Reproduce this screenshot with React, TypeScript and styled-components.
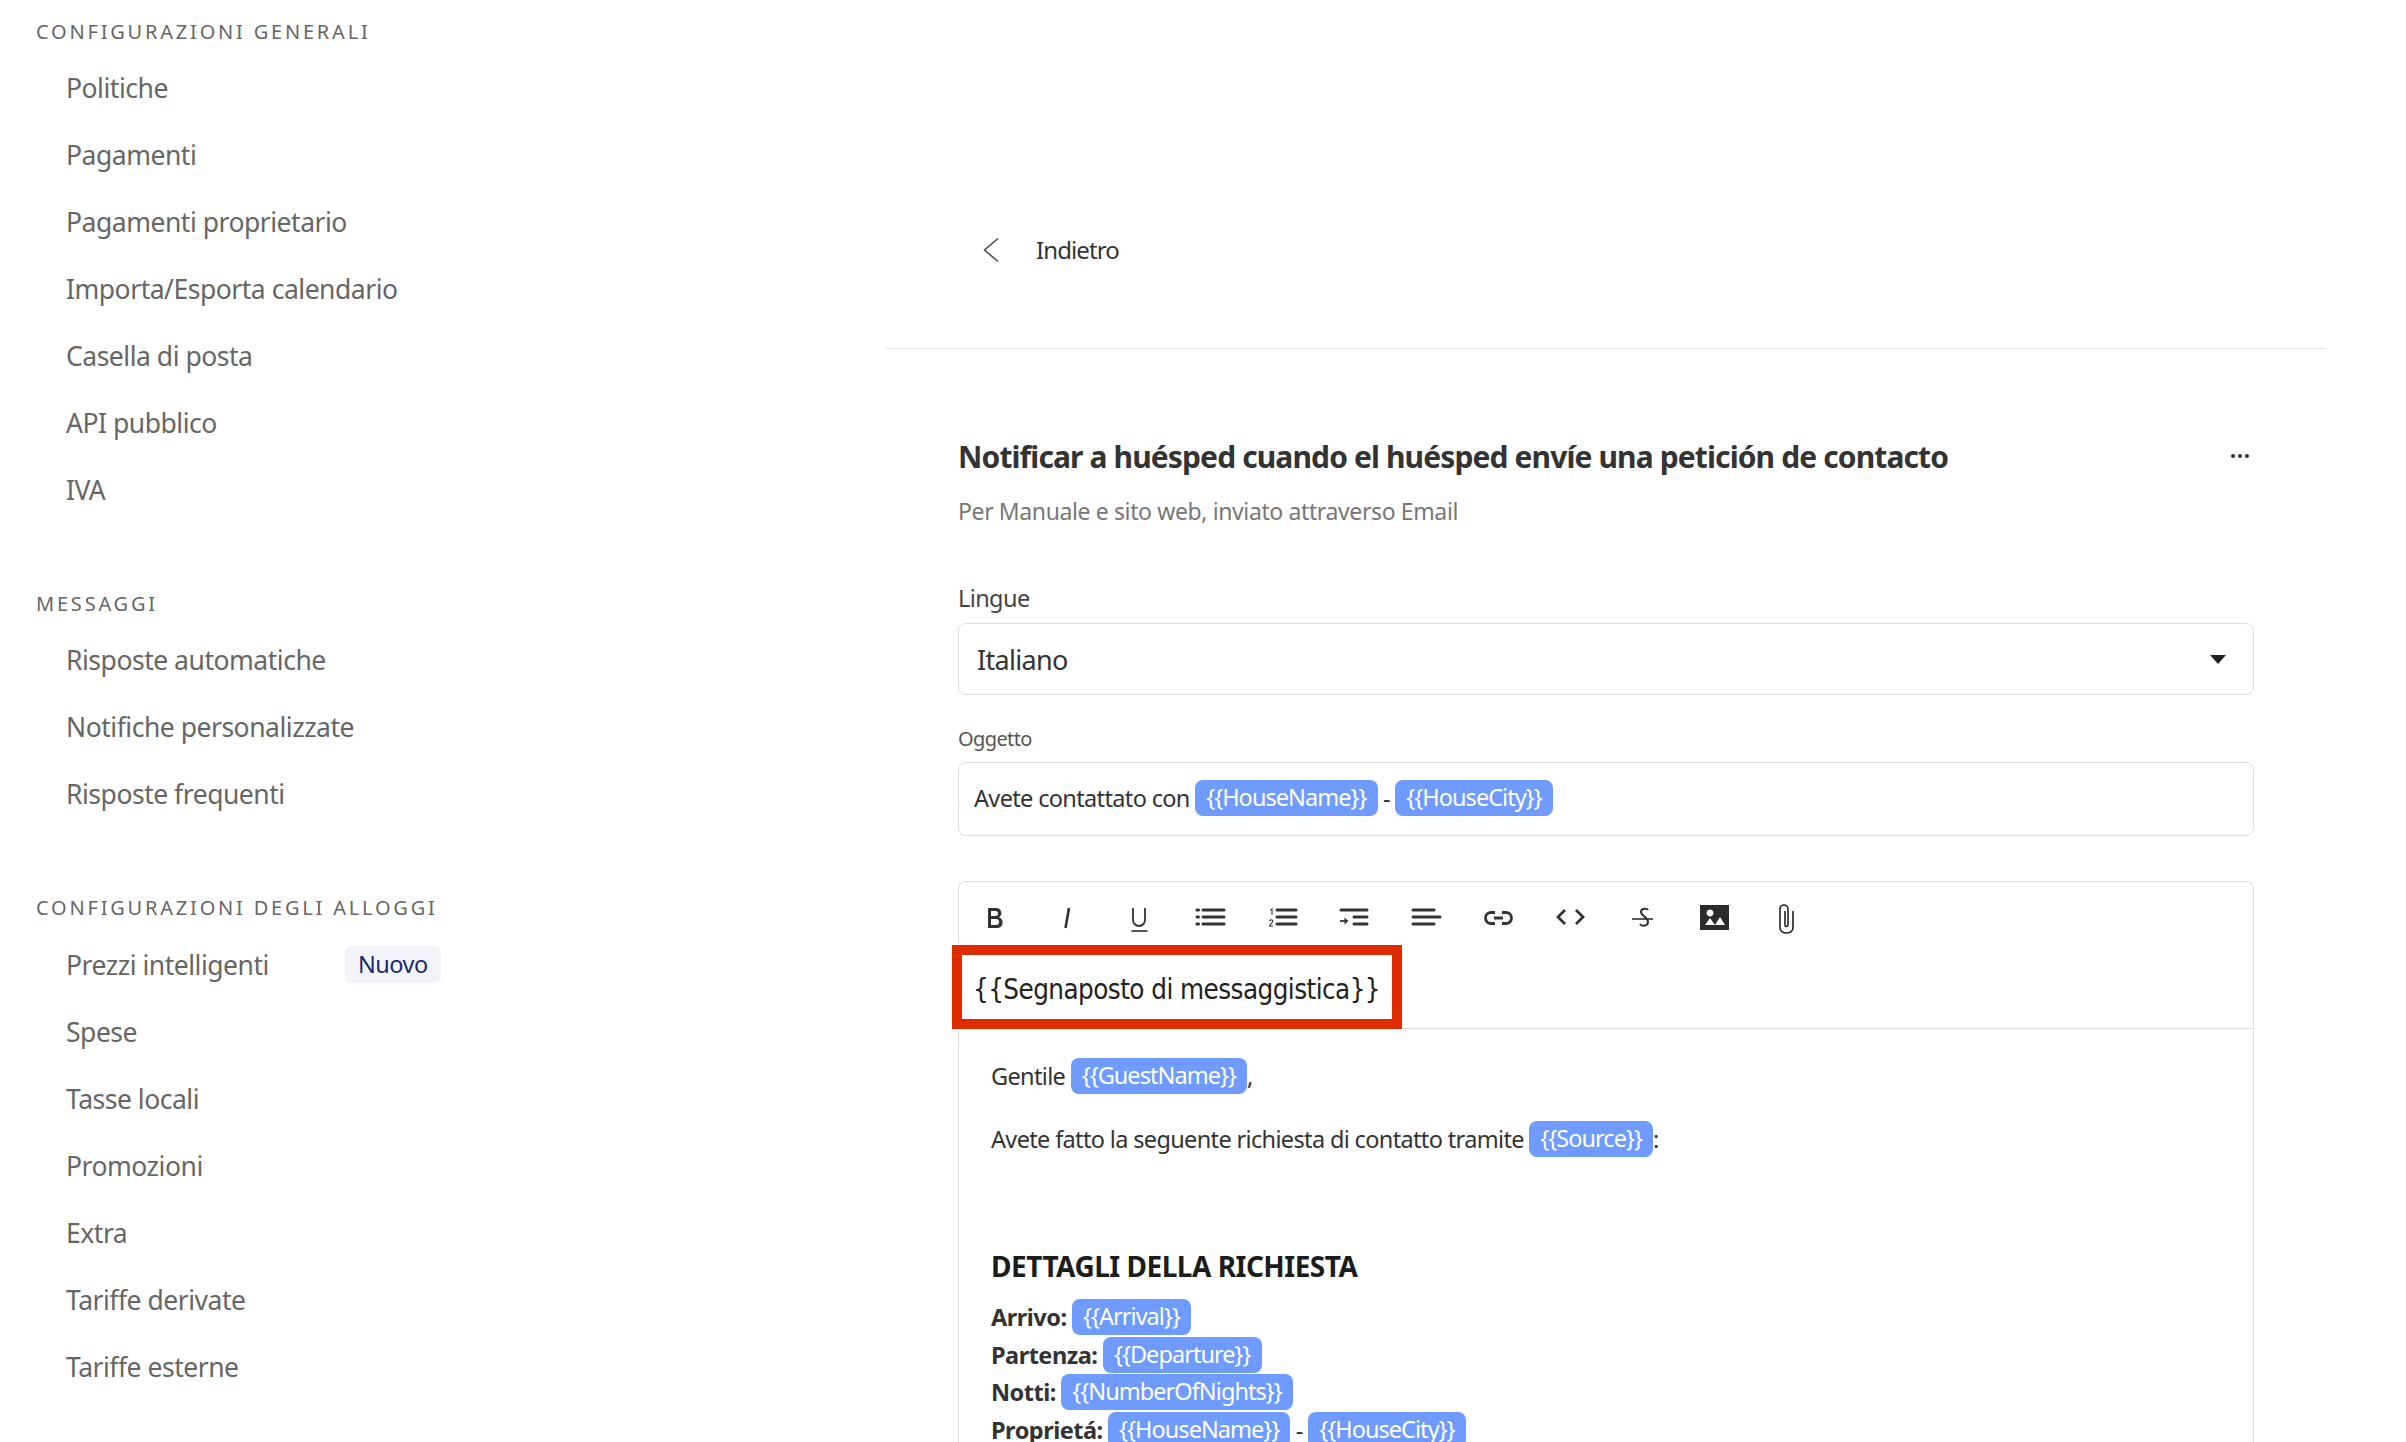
import React from 'react'
import styled, { createGlobalStyle } from 'styled-components'

const GlobalStyle = createGlobalStyle`
  html, body {
    margin: 0;
    padding: 0;
    height: 100%;
    overflow: hidden;
    background: #fff;
  }
  body {
    font-family: 'Noto Sans', 'Open Sans', sans-serif;
  }
`

const settings = ['Politiche', 'Pagamenti', 'Pagamenti proprietario', 'Importa/Esporta calendario', 'Casella di posta', 'API pubblico', 'IVA']
const messages = ['Risposte automatiche', 'Notifiche personalizzate', 'Risposte frequenti']
const rentals = ['Spese', 'Tasse locali', 'Promozioni', 'Extra', 'Tariffe derivate', 'Tariffe esterne']

const Icon = ({ children }: { children: React.ReactNode }) => (
  <svg width="36" height="36" viewBox="0 0 36 36" fill="none" stroke="#333">
    {children}
  </svg>
)

const bars = (x1: number, x2: number) => (
  <path d={`M${x1} 10H${x2}M${x1} 17H${x2}M${x1} 24H${x2}`} strokeWidth="3" strokeLinecap="round" />
)

const toolbar = [
  <Icon key="bold"><path d="M11 8h8a5 5 0 0 1 3 9.200A5.600 5.600 0 0 1 19.500 28H11zM14 11v5h4.500a2.500 2.500 0 0 0 0-5zM14 19v6h5a3 3 0 0 0 0-6z" fill="#333" fillRule="evenodd" stroke="none" /></Icon>,
  <Icon key="italic"><path d="M20 8l-3.500 20" strokeWidth="2.600" /></Icon>,
  <Icon key="underline"><path d="M12 8v12a6 6 0 0 0 12 0V8" strokeWidth="1.800" /><path d="M10.500 31h16" stroke="#555" strokeWidth="2" /></Icon>,
  <Icon key="ul">{bars(10, 31)}<path d="M4 10h1.500M4 17h1.500M4 24h1.500" strokeWidth="3" strokeLinecap="round" /></Icon>,
  <Icon key="ol">{bars(12, 31)}<path d="M5.500 10L7 9v6M4.500 21q1-1.500 2.500-1q1.500 1 0 2.500L4.500 26H8" strokeWidth="1.100" /></Icon>,
  <Icon key="indent"><path d="M5 10h26M18 17h13M18 24h13" strokeWidth="3" strokeLinecap="round" /><path d="M4 21h5" strokeWidth="1.800" /><path d="M8.500 17.500l4 3.500-4 3.500z" fill="#333" stroke="none" /></Icon>,
  <Icon key="align"><path d="M5 10h21M5 17h27M5 24h21" strokeWidth="3" strokeLinecap="round" /></Icon>,
  <Icon key="link"><path d="M15 12.500H11a5.500 5.500 0 0 0 0 11h4M22 12.500h4a5.500 5.500 0 0 1 0 11h-4" strokeWidth="2.800" /><path d="M14 18h9" strokeWidth="3" /></Icon>,
  <Icon key="code"><path d="M13 10l-7 7 7 7M24 10l7 7-7 7" strokeWidth="2.800" /></Icon>,
  <Icon key="strike"><path d="M24 10c-1-2-7-2-7 2 0 4 7 5 7 10 0 4-6 5-8 2" strokeWidth="2" /><path d="M8 19h21" strokeWidth="1.600" /></Icon>,
  <Icon key="image"><path d="M4 5h29v25H4zM14 9.500a3.500 3.500 0 1 0 .01 0zM9 25h10l-5-7zM19 25h10l-5-8z" fill="#2b2b2b" fillRule="evenodd" stroke="none" /></Icon>,
  <Icon key="clip"><path d="M17 11v14a1.500 1.500 0 0 0 3 0V9a4 4 0 0 0-8 0v19a6.500 5 0 0 0 13 0V11" stroke="#222" strokeWidth="1.600" /></Icon>,
]

const App = () => (
  <Page>
    <GlobalStyle />
    <Sidebar>
      <SectionTitle>Configurazioni generali</SectionTitle>
      {settings.map(item => <NavItem key={item}>{item}</NavItem>)}
      <SectionTitle $spaced>Messaggi</SectionTitle>
      {messages.map(item => <NavItem key={item}>{item}</NavItem>)}
      <SectionTitle $spaced>Configurazioni degli alloggi</SectionTitle>
      <NavItem $tall>
        Prezzi intelligenti
        <NewBadge>Nuovo</NewBadge>
      </NavItem>
      {rentals.map(item => <NavItem key={item}>{item}</NavItem>)}
    </Sidebar>
    <Main>
      <BackRow>
        <svg width="18" height="26" viewBox="0 0 18 26" fill="none">
          <path d="M15 1.500L1.500 13 15 24.500" stroke="#444" strokeWidth="1.500" />
        </svg>
        <BackLabel>Indietro</BackLabel>
      </BackRow>
      <Content>
        <TitleRow>
          <Title>Notificar a huésped cuando el huésped envíe una petición de contacto</Title>
          <Dots><i /><i /><i /></Dots>
        </TitleRow>
        <Subtitle>Per Manuale e sito web, inviato attraverso Email</Subtitle>
        <Label>Lingue</Label>
        <Select>
          Italiano
          <Caret />
        </Select>
        <SmallLabel>Oggetto</SmallLabel>
        <SubjectBox>
          Avete contattato con <Tag>{'{{HouseName}}'}</Tag> - <Tag>{'{{HouseCity}}'}</Tag>
        </SubjectBox>
        <Editor>
          <Toolbar>
            {toolbar.map((icon, i) => <ToolButton key={i}>{icon}</ToolButton>)}
          </Toolbar>
          <PlaceholderRow>
            <PlaceholderBox>{'{{Segnaposto di messaggistica}}'}</PlaceholderBox>
          </PlaceholderRow>
          <Body>
            <Line>Gentile <Tag>{'{{GuestName}}'}</Tag>,</Line>
            <Line $top={27}>Avete fatto la seguente richiesta di contatto tramite <Tag>{'{{Source}}'}</Tag>:</Line>
            <Heading>DETTAGLI DELLA RICHIESTA</Heading>
            <DetailLine><strong>Arrivo:</strong> <Tag>{'{{Arrival}}'}</Tag></DetailLine>
            <DetailLine><strong>Partenza:</strong> <Tag>{'{{Departure}}'}</Tag></DetailLine>
            <DetailLine><strong>Notti:</strong> <Tag>{'{{NumberOfNights}}'}</Tag></DetailLine>
            <DetailLine><strong>Proprietá:</strong> <Tag>{'{{HouseName}}'}</Tag> - <Tag>{'{{HouseCity}}'}</Tag></DetailLine>
          </Body>
        </Editor>
      </Content>
    </Main>
  </Page>
)

const Page = styled.div`
  display: flex;
  width: 2406px;
  height: 1442px;
  overflow: hidden;
  background: #fff;
`

const Sidebar = styled.nav`
  flex: 0 0 885px;
  padding: 20px 0 0 36px;
  box-sizing: border-box;
`

const SectionTitle = styled.div<{ $spaced?: boolean }>`
  margin-top: ${props => (props.$spaced ? '68.5px' : '0')};
  margin-bottom: 10.5px;
  height: 24px;
  line-height: 24px;
  font-size: 20px;
  letter-spacing: 2.800px;
  text-transform: uppercase;
  color: #666;
`

const NavItem = styled.div<{ $tall?: boolean }>`
  display: flex;
  align-items: center;
  height: ${props => (props.$tall ? '68px' : '67px')};
  padding-left: 30px;
  font-size: 26.500px;
  letter-spacing: -0.480px;
  color: #666;
`

const NewBadge = styled.span`
  margin-left: 76px;
  padding: 0 13px;
  height: 37px;
  line-height: 36px;
  border-radius: 7px;
  background: #f3f4fa;
  color: #1a2a70;
  font-size: 23.500px;
`

const Main = styled.main`
  flex: 0 0 1441px;
`

const BackRow = styled.div`
  display: flex;
  align-items: center;
  height: 349px;
  padding: 151px 0 0 98px;
  box-sizing: border-box;
  border-bottom: 1px solid #e2e2e2;
`

const BackLabel = styled.span`
  margin-left: 35px;
  margin-top: -1px;
  font-size: 24px;
  letter-spacing: -0.900px;
  color: #333;
`

const Content = styled.div`
  width: 1296px;
  margin-left: 73px;
  padding-top: 83px;
`

const TitleRow = styled.div`
  display: flex;
  align-items: center;
  justify-content: space-between;
  height: 48px;
`

const Title = styled.h1`
  margin: 0;
  font-size: 30px;
  font-weight: 700;
  letter-spacing: -0.880px;
  color: #333;
`

const Dots = styled.div`
  display: flex;
  gap: 3px;
  margin-right: 5px;
  i {
    width: 4px;
    height: 4px;
    border-radius: 50%;
    background: #333;
  }
`

const Subtitle = styled.div`
  margin-top: 16px;
  height: 30px;
  line-height: 30px;
  font-size: 23px;
  letter-spacing: -0.380px;
  color: #777;
`

const Label = styled.div`
  margin-top: 57px;
  height: 30px;
  line-height: 30px;
  font-size: 23.500px;
  letter-spacing: -0.600px;
  color: #444;
`

const Select = styled.div`
  display: flex;
  align-items: center;
  justify-content: space-between;
  height: 72px;
  margin-top: 10px;
  padding: 0 27px 0 18px;
  box-sizing: border-box;
  border: 1px solid #dedede;
  border-radius: 8px;
  font-size: 27px;
  letter-spacing: -0.700px;
  color: #333;
`

const Caret = styled.span`
  width: 0;
  height: 0;
  border-left: 8px solid transparent;
  border-right: 8px solid transparent;
  border-top: 9px solid #222;
`

const SmallLabel = styled.div`
  margin-top: 30px;
  height: 28px;
  line-height: 28px;
  font-size: 20px;
  letter-spacing: -0.600px;
  color: #555;
`

const SubjectBox = styled.div`
  height: 74px;
  margin-top: 9px;
  padding: 17px 15px 0;
  box-sizing: border-box;
  border: 1px solid #dedede;
  border-radius: 8px;
  font-size: 23.500px;
  letter-spacing: -0.650px;
  line-height: 36px;
  color: #333;
`

const Tag = styled.span`
  display: inline-block;
  height: 36px;
  line-height: 35px;
  padding: 0 11px;
  border-radius: 8px;
  background: #6f9bff;
  color: #fff;
  letter-spacing: -0.950px;
  vertical-align: top;
`

const Editor = styled.div`
  margin-top: 45px;
  border: 1px solid #dedede;
  border-bottom: none;
  border-radius: 8px 8px 0 0;
`

const Toolbar = styled.div`
  display: flex;
  align-items: center;
  height: 72px;
`

const ToolButton = styled.span`
  display: flex;
  align-items: center;
  justify-content: center;
  width: 71.900px;
`

const PlaceholderRow = styled.div`
  position: relative;
  height: 75px;
  box-sizing: border-box;
  border-bottom: 1px solid #dedede;
`

const PlaceholderBox = styled.div`
  position: absolute;
  left: -7px;
  top: -9px;
  width: 450px;
  height: 84px;
  box-sizing: border-box;
  padding: 4px 0 0 11px;
  border: 10px solid #dc2c00;
  background: #fff;
  font-family: 'DejaVu Sans', sans-serif;
  font-stretch: condensed;
  font-size: 27.500px;
  letter-spacing: -0.550px;
  line-height: 60px;
  color: #222;
  white-space: nowrap;
`

const Body = styled.div`
  padding: 29px 32px 120px;
  font-size: 23.500px;
  letter-spacing: -0.650px;
  line-height: 36px;
  color: #333;
`

const Line = styled.div<{ $top?: number }>`
  margin-top: ${props => props.$top ?? 0}px;
`

const Heading = styled.div`
  margin-top: 91px;
  margin-bottom: 15px;
  font-size: 28px;
  font-weight: 700;
  letter-spacing: -0.500px;
  color: #1c1c1c;
`

const DetailLine = styled.div`
  height: 37.700px;
  strong {
    font-weight: 700;
    color: #333;
    letter-spacing: -0.500px;
  }
`

export default App
